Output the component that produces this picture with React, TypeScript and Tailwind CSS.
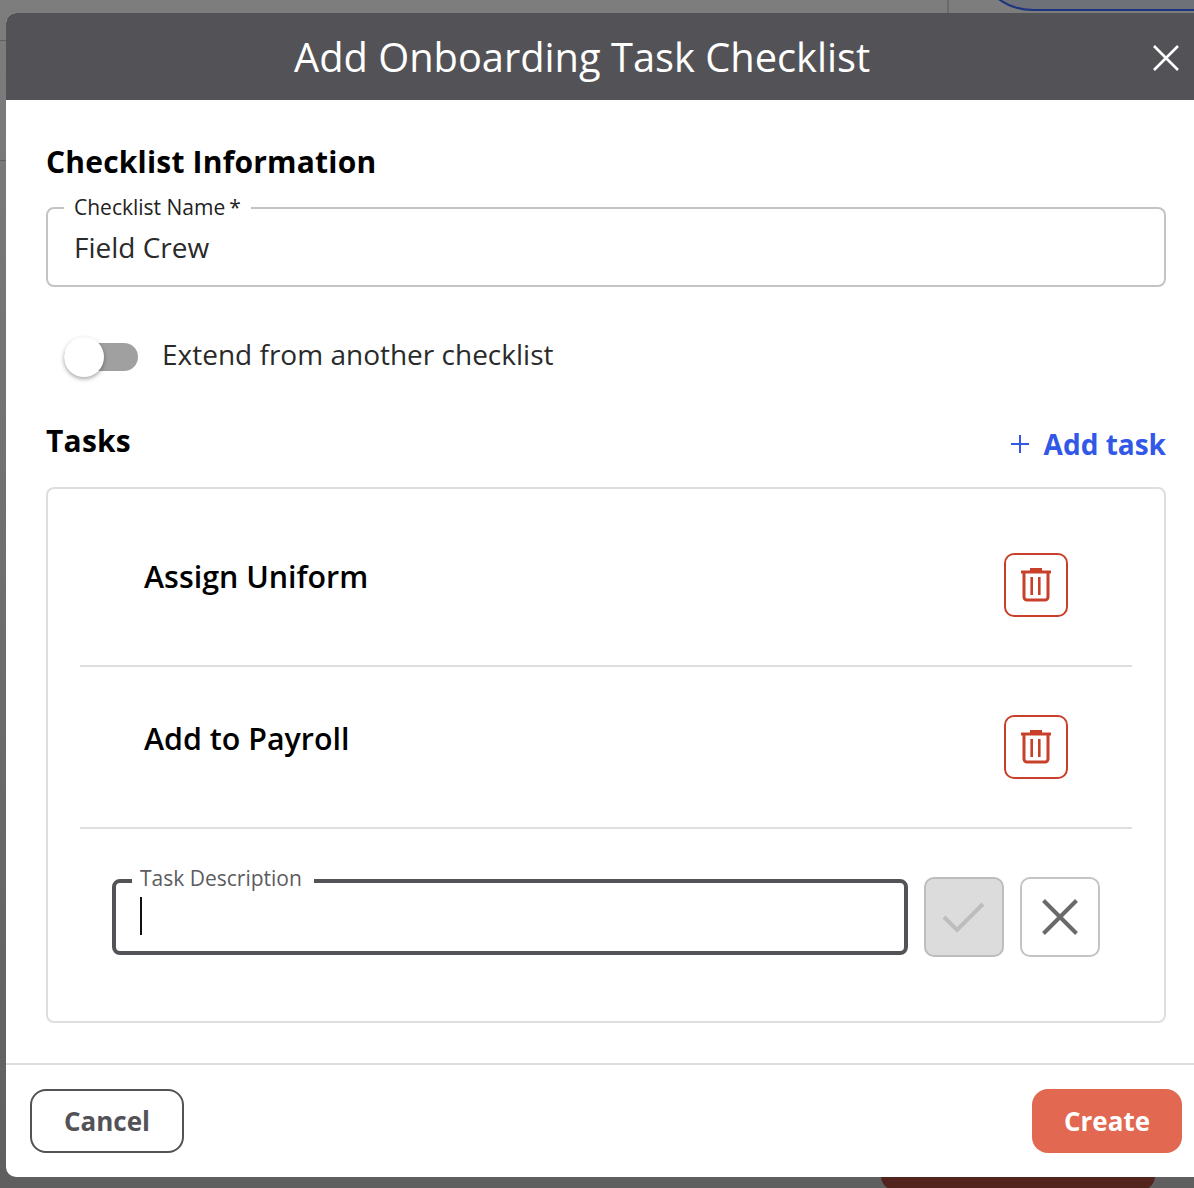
const font = "font-['Open_Sans',sans-serif]";

function TrashIcon() {
  return (
    <svg width="32" height="36" viewBox="0 0 32 36" fill="none" stroke="#c9402a">
      <path d="M10 2.5h12" strokeWidth="3" />
      <path d="M1 5h30" strokeWidth="3" />
      <path d="M4 5v25a3 3 0 0 0 3 3h18a3 3 0 0 0 3-3V5" strokeWidth="3" />
      <path d="M11.7 10v18M19.3 10v18" strokeWidth="2.6" />
    </svg>
  );
}

function TaskRow({ name }: { name: string }) {
  return (
    <div className="flex h-[162px] border-b-2 border-[#dedede] pl-16 pr-16 pt-[48px] justify-between mx-8">
      <span className="text-[30.4px] leading-[40px] font-semibold mt-[4px] text-black">{name}</span>
      <button
        type="button"
        className="flex items-center justify-center w-16 h-16 rounded-[10px] border-2 border-[#c9402a] bg-white"
      >
        <TrashIcon />
      </button>
    </div>
  );
}

export default function App() {
  return (
    <div className={`relative h-[1188px] w-[1194px] overflow-hidden bg-linear-to-b from-[#7d7d7d] to-[#5f5f5f] ${font}`}>
      <div className="absolute left-0 top-[40px] w-[6px] h-px bg-[#5f5f5f]" />
      <div className="absolute left-0 top-[160px] w-[6px] h-px bg-[#5f5f5f]" />
      <div className="absolute left-[947px] top-0 w-[2px] h-[13px] bg-[#6a6a6a]" />
      <div className="absolute left-[973px] -top-[110px] w-[340px] h-[121px] rounded-[60px] border-2 border-[#1f3480] bg-[#6f7179]" />
      <div className="absolute left-[881px] top-[1130px] w-[274px] h-[60px] rounded-[14px] bg-[#52241d]" />

      <div className="absolute left-[6px] top-[13px] w-[1200px] h-[1164px] rounded-[10px] bg-white overflow-hidden flex flex-col">
        <header className="relative h-[87px] shrink-0 bg-[#535357] flex items-center pl-[288px]">
          <h1 className="text-[39.8px] leading-[50px] font-medium text-white">
            Add Onboarding Task Checklist
          </h1>
          <svg className="absolute left-[1146px] top-[31px]" width="28" height="28" viewBox="0 0 28 28" fill="none">
            <path d="M2 2l24 24M26 2L2 26" stroke="#fff" strokeWidth="2.6" />
          </svg>
        </header>

        <div className="pl-10 pr-[34px] flex-1">
          <h2 className="mt-[42px] text-[30px] leading-[40px] font-bold tracking-[0.2px] text-black">
            Checklist Information
          </h2>

          <fieldset className="mt-[15px] w-[1120px] h-[90px] rounded-lg border-2 border-[#c4c4c4] pl-[16px]">
            <legend className="relative -top-[1px] px-[10px] text-[21px] leading-[22px] text-[#222]">
              Checklist Name<span className="ml-1">*</span>
            </legend>
            <div className="pl-[10px] mt-[8px] text-[28px] leading-[40px] text-[#2a2a2a]">Field Crew</div>
          </fieldset>

          <div className="flex items-center mt-[51px] ml-[18px]">
            <div className="relative w-[74px] h-[28px] rounded-full bg-[#a0a0a0]">
              <div className="absolute left-0 -top-[6px] w-10 h-10 rounded-full bg-white shadow-[0_2px_4px_rgba(0,0,0,0.35)]" />
            </div>
            <span className="relative -top-[3px] ml-6 text-[28px] leading-[38px] text-[#2a2a2a]">
              Extend from another checklist
            </span>
          </div>

          <div className="flex items-center justify-between w-[1120px] mt-[43px]">
            <h2 className="text-[30px] leading-[40px] font-bold tracking-[0.2px] text-black">Tasks</h2>
            <div className="flex items-center text-[#3158e6] mt-[6px]">
              <svg width="18" height="18" viewBox="0 0 18 18" fill="none" className="mr-[15px]">
                <path d="M9 0v18M0 9h18" stroke="#3158e6" strokeWidth="2" />
              </svg>
              <span className="text-[28px] leading-[38px] font-bold">Add task</span>
            </div>
          </div>

          <div className="mt-[24px] w-[1120px] h-[536px] rounded-lg border-2 border-[#dedede] pt-4">
            <TaskRow name="Assign Uniform" />
            <TaskRow name="Add to Payroll" />

            <div className="flex items-start mt-[48px] ml-[64px]">
              <fieldset className="w-[796px] h-[85px] rounded-lg border-[4px] border-[#535357] pl-[16px] -mt-[7px]">
                <legend className="relative -top-[3px] pl-[8px] pr-[12px] text-[21px] leading-[22px] text-[#5c5c60]">
                  Task Description
                </legend>
                <div className="ml-[8px] mt-[5px] w-[2px] h-[38px] bg-[#111]" />
              </fieldset>
              <button
                type="button"
                className="ml-4 flex items-center justify-center w-20 h-20 rounded-[10px] border-2 border-[#bdbdbd] bg-[#dcdcdc]"
              >
                <svg width="44" height="32" viewBox="0 0 44 32" fill="none">
                  <path d="M2 16l13 13L41 3" stroke="#bdbdbd" strokeWidth="4" />
                </svg>
              </button>
              <button
                type="button"
                className="ml-4 flex items-center justify-center w-20 h-20 rounded-[10px] border-2 border-[#c4c4c4] bg-white"
              >
                <svg width="36" height="36" viewBox="0 0 36 36" fill="none">
                  <path d="M1.5 1.5l33 33M34.5 1.5l-33 33" stroke="#6a6a6a" strokeWidth="4" />
                </svg>
              </button>
            </div>
          </div>
        </div>

        <footer className="h-[114px] shrink-0 border-t-2 border-[#dedede] flex items-start justify-between pl-6 pr-[24px] pt-[24px]">
          <button
            type="button"
            className="w-[154px] h-16 rounded-2xl border-2 border-[#535357] bg-white text-[26px] font-bold text-[#535357]"
          >
            Cancel
          </button>
          <button
            type="button"
            className="w-[150px] h-16 rounded-2xl bg-[#e26851] text-[26px] font-bold text-white"
          >
            Create
          </button>
        </footer>
      </div>
    </div>
  );
}
